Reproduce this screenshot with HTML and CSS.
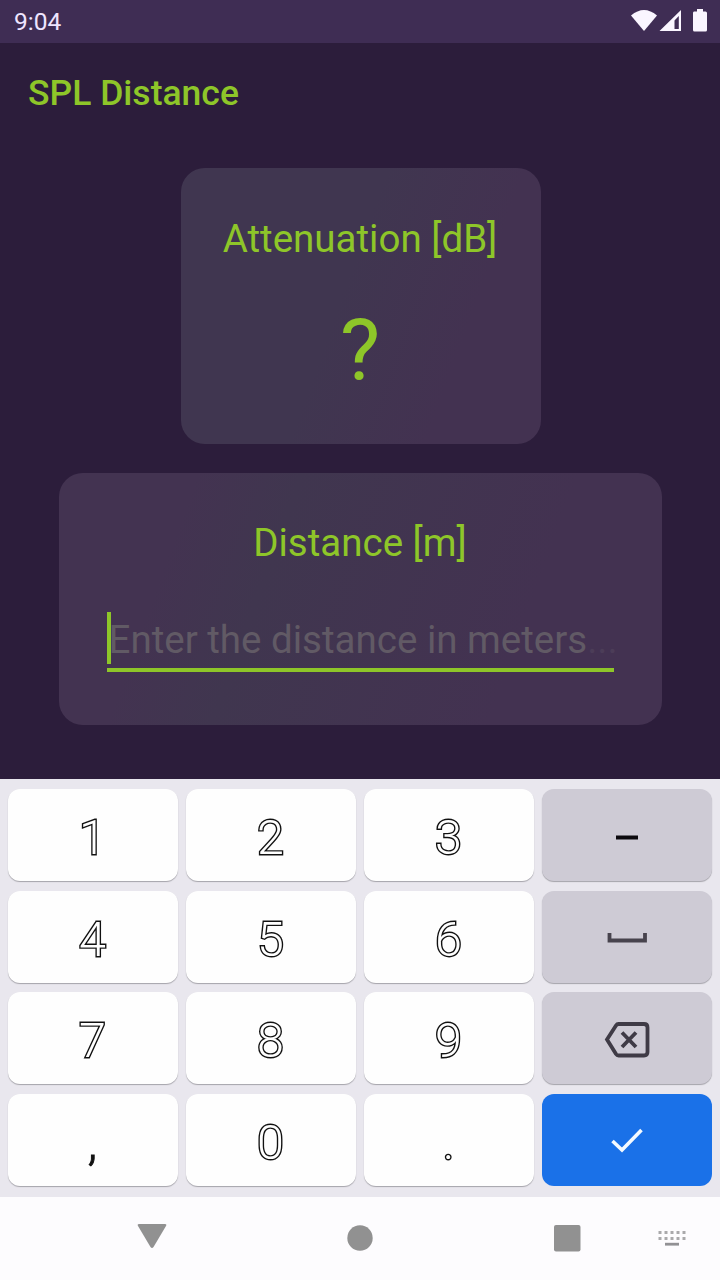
FILE: index.html
```html
<!DOCTYPE html>
<html lang="en">
<head>
<meta charset="utf-8">
<title>SPL Distance</title>
<link rel="stylesheet" href="styles.css">
</head>
<body>
<div class="screen">
  <header class="status">
    <span class="time">9:04</span>
    <svg class="status-icons" width="80" height="28" viewBox="0 0 80 28">
      <path d="M0 8.500 Q13 -2.500 26 8.500 L13 24Z"/>
      <path fill-rule="evenodd" d="M50 3V24H28.500ZM47.800 9L43.500 13.500V22H47.800Z"/>
      <path d="M63 4.500h3V2h6v2.500h2.500q1.500 0 1.500 1.500V23q0 1.500-1.500 1.500h-11q-1.500 0-1.500-1.500V6q0-1.500 1-1.500Z"/>
    </svg>
  </header>
  <main class="app">
    <h1 class="title">SPL Distance</h1>
    <section class="card result">
      <h2 class="label">Attenuation [dB]</h2>
      <div class="value">?</div>
    </section>
    <section class="card entry">
      <h2 class="label">Distance [m]</h2>
      <div class="field"><span class="cursor"></span><span class="hint">Enter the distance in meters<span class="dots">...</span></span></div>
    </section>
  </main>
  <section class="keyboard">
    <button class="key">1</button><button class="key">2</button><button class="key">3</button>
    <button class="key side"><svg width="44" height="36" viewBox="0 0 44 36"><path d="M11 18.500H33" stroke="#0c0a0e" stroke-width="4"/></svg></button>
    <button class="key">4</button><button class="key">5</button><button class="key">6</button>
    <button class="key side"><svg width="44" height="36" viewBox="0 0 44 36"><path d="M4.500 13V20.500H40V13" fill="none" stroke="#47434d" stroke-width="3.800"/></svg></button>
    <button class="key">7</button><button class="key">8</button><button class="key">9</button>
    <button class="key side"><svg width="46" height="36" viewBox="0 0 46 36"><path d="M14.500 2H40Q43.500 2 43.500 5.500V30Q43.500 33.500 40 33.500H14.500Q13 33.500 12 32L3 17.500L12 3.500Q13 2 14.500 2ZM18 10.500L32 25M32 10.500L18 25" fill="none" stroke="#3f3b46" stroke-width="3.800"/></svg></button>
    <button class="key comma">,</button><button class="key">0</button><button class="key">.</button>
    <button class="key side enter"><svg width="44" height="36" viewBox="0 0 44 36"><path d="M7.500 18L17 27L36.500 7" fill="none" stroke="#f4faff" stroke-width="3.600"/></svg></button>
  </section>
  <nav class="nav">
    <svg width="720" height="83" viewBox="0 0 720 83">
      <path d="M139 27H165Q167 27 166 29L153.500 50Q152 52 150.500 50L138 29Q137 27 139 27Z"/>
      <circle cx="360" cy="41" r="12.700"/>
      <rect x="554" y="28" width="26.500" height="26.500" rx="2"/>
      <path d="M658.500 35.500H686M658.500 41.500H686" class="dotted"/>
      <path d="M665 47.200H679" class="space"/>
    </svg>
  </nav>
</div>
</body>
</html>
```
FILE: styles.css
```css
* { box-sizing: border-box; }
body {
  margin: 0;
  background: #2c1d3b;
  font-family: Roboto, sans-serif;
}
.screen {
  width: 720px;
  height: 1280px;
  display: flex;
  flex-direction: column;
  overflow: hidden;
}
.status {
  height: 43px;
  flex: none;
  display: flex;
  justify-content: space-between;
  align-items: center;
  padding: 0 9px 0 14px;
  background: #3f2d54;
}
.time { font-size: 24.500px; color: #eee5ff; line-height: 43px; }
.status-icons { fill: #faf6ff; margin-bottom: 1px; }
.app {
  height: 736px;
  flex: none;
  display: flex;
  flex-direction: column;
  align-items: center;
}
.title {
  align-self: flex-start;
  margin: 29px 0 0 28px;
  font-size: 35.500px;
  line-height: 42px;
  font-weight: 500;
  color: #8ec629;
}
.card {
  display: flex;
  flex-direction: column;
  align-items: center;
  border-radius: 24px;
  background: linear-gradient(110deg, #403650 45%, #433251 75%);
  color: #8ec629;
}
.result { width: 360px; height: 276px; margin-top: 54px; padding-top: 48px; margin-left: 2px; }
.result .label { margin-left: -2px; }
.entry { width: 603px; height: 252px; margin-top: 29px; padding-top: 47px; background: linear-gradient(110deg, #433351 20%, #40364f 35%, #433251 75%); }
.label { margin: 0; font-size: 38.500px; line-height: 46px; font-weight: 400; }
.value { margin: 39px 0 0 -2px; font-size: 85px; line-height: 100px; }
.field {
  display: flex;
  width: 507px;
  height: 60px;
  margin-top: 46px;
  border-bottom: 4px solid #8ec629;
}
.cursor { width: 4px; height: 52px; flex: none; background: #8ec629; }
.hint {
  margin-left: -2px;
  font-size: 38.500px;
  line-height: 56px;
  white-space: nowrap;
  color: #615a65;
}
.dots { color: #4c3d58; }
.keyboard {
  height: 418px;
  flex: none;
  display: grid;
  grid-template-columns: repeat(4, 170px);
  grid-template-rows: repeat(4, 92px);
  gap: 9.700px 8px;
  padding: 10px 8px;
  background: #e9e7ee;
}
.key {
  display: flex;
  justify-content: center;
  align-items: center;
  padding: 6px 1px 0 0;
  border: 0;
  border-radius: 12px;
  background: #fefefe;
  box-shadow: 0 1px 1px #a5a3aa;
  font: 300 48.500px/86px Roboto, sans-serif;
  color: #fff;
  -webkit-text-stroke: 2.800px #111;
  paint-order: stroke fill;
}
.side { padding: 3px 0 0; background: #cecbd5; }
.enter { padding-top: 1px; background: #1a71e8; box-shadow: none; }
.comma { color: #111; -webkit-text-stroke-width: 1px; }
.nav { flex: 1; background: #fdfcfe; }
.nav svg { display: block; fill: #919191; }
.dotted { stroke: #aaa9ab; stroke-width: 3px; stroke-dasharray: 3px 3px; }
.space { stroke: #929194; stroke-width: 2.800px; }
```
